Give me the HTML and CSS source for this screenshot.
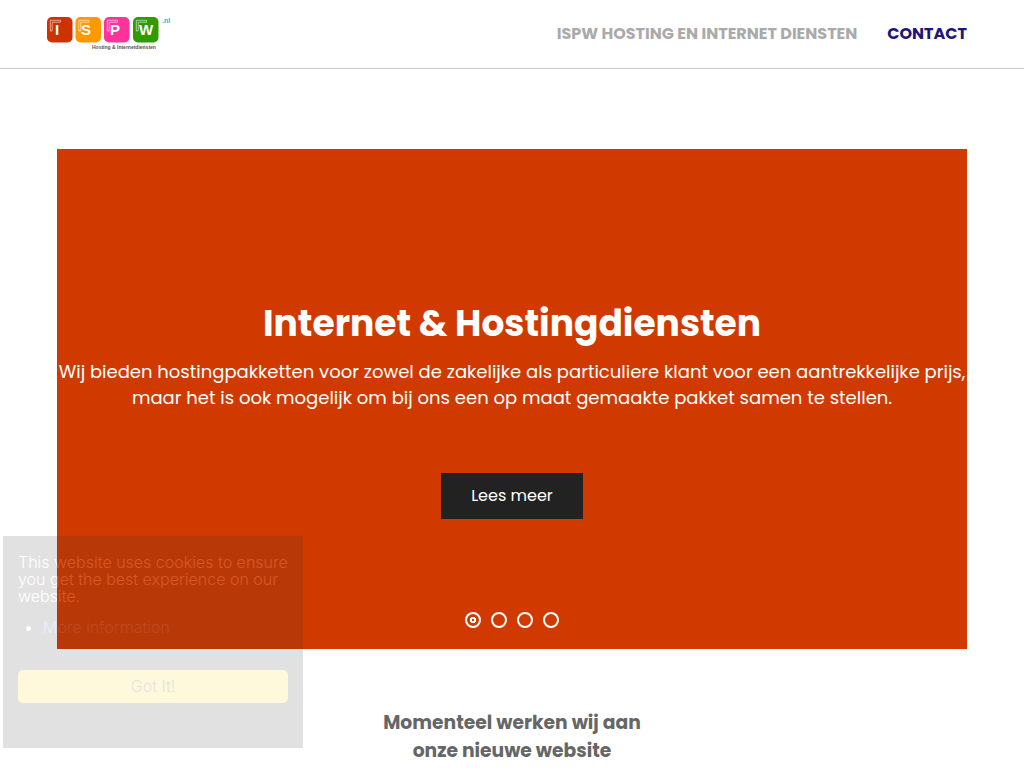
FILE: index.html
```html
<!DOCTYPE html>
<html lang="nl">
<head>
    <meta charset="UTF-8">
    <meta name="viewport" content="width=device-width, initial-scale=1.0">
    <title>ISPW Hosting en Internet Diensten</title>
    <link rel="stylesheet" href="styles.css">
</head>
<body>
    <header class="site-header">
        <a href="#" class="logo" aria-label="ISPW.nl">
            <svg width="124" height="36" viewBox="0 0 124 36">
                <rect x="0" y="1" width="25.500" height="25.500" rx="5" fill="#cc3300"/>
                <rect x="28.500" y="1" width="25.500" height="25.500" rx="5" fill="#ff9900"/>
                <rect x="57" y="1" width="25.500" height="25.500" rx="5" fill="#ff3399"/>
                <rect x="86" y="1" width="25.500" height="25.500" rx="5" fill="#339900"/>
                <g fill="none" stroke="#fff" stroke-opacity=".7" stroke-width=".8">
                    <path d="M3.300 15V4.300H13.500V6.200H5.200V15Z"/>
                    <path d="M31.800 15V4.300H42V6.200H33.700V15Z"/>
                    <path d="M60.300 15V4.300H70.500V6.200H62.200V15Z"/>
                    <path d="M89.300 15V4.300H99.500V6.200H91.200V15Z"/>
                </g>
                <g class="logo-letters">
                    <text x="10" y="19">I</text>
                    <text x="39" y="19">S</text>
                    <text x="68" y="19">P</text>
                    <text x="99" y="19">W</text>
                </g>
                <text class="logo-tld" x="115" y="7">.nl</text>
                <text class="logo-tagline" x="45" y="33">Hosting &amp; Internetdiensten</text>
            </svg>
        </a>
        <nav class="main-nav">
            <a href="#" class="active">ISPW HOSTING EN INTERNET DIENSTEN</a>
            <a href="#contact">CONTACT</a>
        </nav>
    </header>

    <main>
        <section class="slider">
            <div class="slide">
                <h1>Internet &amp; Hostingdiensten</h1>
                <p>Wij bieden hostingpakketten voor zowel de zakelijke als particuliere klant voor een aantrekkelijke prijs, maar het is ook mogelijk om bij ons een op maat gemaakte pakket samen te stellen.</p>
                <a href="#meer" class="slide-button">Lees meer</a>
            </div>
            <div class="slider-dots">
                <button type="button" class="dot current" aria-label="Slide 1"></button>
                <button type="button" class="dot" aria-label="Slide 2"></button>
                <button type="button" class="dot" aria-label="Slide 3"></button>
                <button type="button" class="dot" aria-label="Slide 4"></button>
            </div>
        </section>

        <section class="notice">
            <h3>Momenteel werken wij aan<br>onze nieuwe website</h3>
        </section>
    </main>

    <div class="cookie-box">
        <p>This website uses cookies to ensure you get the best experience on our website.</p>
        <ul>
            <li><a href="#cookies">More information</a></li>
        </ul>
        <button type="button" class="cookie-button">Got It!</button>
    </div>
</body>
</html>
```
FILE: styles.css
```css
* {
    box-sizing: border-box;
}

body {
    margin: 0;
    background-color: #fff;
    font-family: Poppins, Inter, sans-serif;
    color: #666;
}

a {
    text-decoration: none;
}

.site-header {
    display: flex;
    justify-content: space-between;
    align-items: center;
    padding: 16px 57px 16px 47px;
    border-bottom: 1px solid #ccc;
}

.logo svg {
    display: block;
}

.logo-letters {
    fill: #fff;
    font: bold 15px "Liberation Sans", sans-serif;
    text-anchor: middle;
}

.logo-tld {
    fill: #00cccc;
    font: bold 7px "Liberation Sans", sans-serif;
}

.logo-tagline {
    fill: #555;
    font: bold 5px "Liberation Sans", sans-serif;
}

.main-nav {
    display: flex;
    gap: 30px;
    font-size: 16px;
    font-weight: 700;
    line-height: 22px;
}

.main-nav a {
    color: #1f1675;
}

.main-nav a.active {
    color: #aaa;
}

.slider {
    display: flex;
    flex-direction: column;
    min-height: 500px;
    margin: 80px 57px 0;
    padding-bottom: 21px;
    background-color: #d03a00;
    color: #fff;
    text-align: center;
}

.slide {
    flex: 1;
    padding-top: 151px;
}

.slide h1 {
    margin: 0 0 11px;
    font-size: 36px;
    line-height: 48px;
}

.slide p {
    margin: 0 0 62px;
    font-size: 18px;
    line-height: 26px;
}

.slide-button {
    display: inline-block;
    padding: 0 30px;
    background-color: #222;
    color: #fff;
    font-size: 16px;
    line-height: 46px;
}

.slider-dots {
    display: flex;
    justify-content: center;
    gap: 10px;
}

.dot {
    width: 16px;
    height: 16px;
    padding: 0;
    border: 2px solid #fff;
    border-radius: 50%;
    background: transparent;
}

.dot.current {
    background: radial-gradient(circle, #d03a00 1px, #fff 1px, #fff 3px, transparent 3px);
}

.notice {
    padding: 60px 57px 0;
    text-align: center;
}

.notice h3 {
    margin: 0;
    line-height: 28px;
}

.cookie-box {
    position: fixed;
    left: 3px;
    bottom: 20px;
    width: 300px;
    padding: 18px 15px 45px;
    background-color: #303030;
    color: #fff;
    font-family: "Helvetica Neue", Inter, sans-serif;
    font-size: 16px;
    font-weight: 300;
    line-height: 17px;
    opacity: .145;
}

.cookie-box p {
    margin: 0 0 14px;
}

.cookie-box ul {
    margin: 0 0 34px;
    padding-left: 25px;
}

.cookie-box li a {
    color: #31a8f0;
}

.cookie-button {
    display: block;
    width: 100%;
    height: 33px;
    border: none;
    border-radius: 5px;
    background-color: #f1d600;
    color: #303030;
    font: inherit;
}
```
